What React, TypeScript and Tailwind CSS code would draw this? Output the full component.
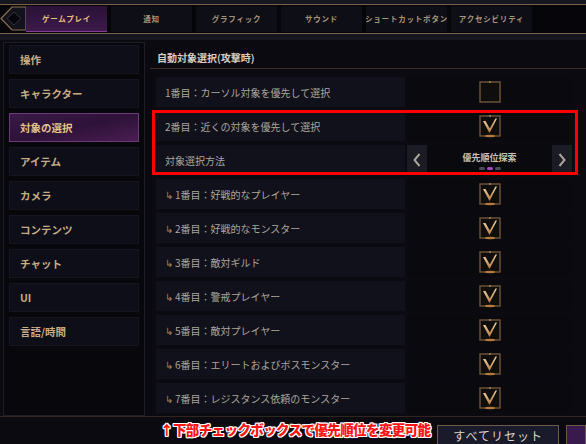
import React from 'react'

const tabs = ['ゲームプレイ', '通知', 'グラフィック', 'サウンド', 'ショートカットボタン', 'アクセシビリティ']

const menu = ['操作', 'キャラクター', '対象の選択', 'アイテム', 'カメラ', 'コンテンツ', 'チャット', 'UI', '言語/時間']

const subRows = [
  '1番目：好戦的なプレイヤー',
  '2番目：好戦的なモンスター',
  '3番目：敵対ギルド',
  '4番目：警戒プレイヤー',
  '5番目：敵対プレイヤー',
  '6番目：エリートおよびボスモンスター',
  '7番目：レジスタンス依頼のモンスター',
]

const Checkbox: React.FC<{ checked?: boolean }> = ({ checked }) => (
  <svg width="22" height="23" viewBox="0 0 22 23">
    <defs>
      <linearGradient id="chk" x1="0" y1="0" x2="0" y2="1">
        <stop offset="0" stopColor="#f3dcae" />
        <stop offset="1" stopColor="#b8783a" />
      </linearGradient>
    </defs>
    <rect x="1" y="1" width="20" height="20" fill="#100e0d" stroke="#6a5038" strokeWidth="1.5" />
    <circle cx="11" cy="1" r="1" fill="#a88458" />
    {checked && (
      <>
        <path d="M4 6 L10.5 18 L18 3.5 L16.5 3.5 L10.8 13.5 L6.5 6 Z" fill="url(#chk)" />
        <ellipse cx="11" cy="21" rx="5" ry="1.2" fill="#d28a3a" opacity="0.8" />
      </>
    )}
  </svg>
)

const Row: React.FC<{ children: React.ReactNode; right: React.ReactNode }> = ({ children, right }) => (
  <div className="flex h-[30px] gap-[2px] ml-[6px]">
    <div className="w-[249px] bg-[#10111b] flex items-center pl-[9px] text-[10px] text-[#aca69c]">
      {children}
    </div>
    <div className="w-[165px] bg-[#09090e] flex items-center justify-center">{right}</div>
  </div>
)

export default function App() {
  return (
    <div className="relative w-[586px] h-[444px] overflow-hidden bg-[#0a0a10] font-['Noto_Sans_CJK_JP','Noto_Sans',sans-serif]">
      {/* tab bar */}
      <div className="h-[40px] bg-[#161621] pt-[4px]">
        <div className="flex items-center h-[30px] border-y border-[#7a6146] bg-[#06060a]">
          <svg width="27" height="30" viewBox="0 0 27 30" className="shrink-0 -ml-[1px]">
            <path d="M2 14.5 L13 3 L27 3 L27 26 L13 26 Z" fill="#12121b" stroke="#8a7050" strokeWidth="1.2" />
            <path d="M8 14.5 L15 8 L22 14.5 L15 21 Z" fill="#06060a" stroke="#3a3040" strokeWidth="1" />
          </svg>
          <div className="flex gap-[4px] h-[26px]">
            {tabs.map((t, i) => (
              <div
                key={t}
                className={
                  i === 0
                    ? 'w-[81px] shrink-0 flex items-center justify-center bg-gradient-to-b from-[#2a1236] to-[#3d1a4c] border-b border-[#8a3a9a] text-[7.5px] font-bold text-[#e6c27e] tracking-[0.8px]'
                    : 'w-[81px] shrink-0 flex items-center justify-center bg-[#0e0e16] text-[7.5px] font-bold text-[#a8957a] tracking-[0.8px] overflow-hidden whitespace-nowrap'
                }
              >
                {t}
              </div>
            ))}
          </div>
        </div>
      </div>

      <div className="flex pt-[2px]">
        {/* sidebar */}
        <div className="ml-[3px] w-[142px] h-[374px] border border-[#1e1e28] bg-[#08080c] px-[5px] pt-[2px] flex flex-col gap-[5px]">
          {menu.map((m, i) => (
            <div
              key={m}
              className={
                i === 2
                  ? 'h-[29px] flex items-center pl-[10px] text-[10.5px] font-bold text-[#e4c48c] bg-gradient-to-br from-[#3a1a48] via-[#2e1238] to-[#4a1e52] border border-[#6a3a78]'
                  : 'h-[29px] flex items-center pl-[10px] text-[10.5px] font-bold text-[#c8ad84] bg-[#0e0e18] border border-[#15151f]'
              }
            >
              {m}
            </div>
          ))}
        </div>

        {/* content */}
        <div className="ml-[5px] flex-1">
          <div className="h-[27px] flex items-end pl-[7px] pb-[3px] border-b border-[#3a3128] text-[10px] font-bold text-[#d8d0c0]">
            自動対象選択(攻撃時)
          </div>
          <div className="pt-[8px] flex flex-col gap-[4px]">
            <Row right={<Checkbox />}>1番目：カーソル対象を優先して選択</Row>
            <Row right={<Checkbox checked />}>2番目：近くの対象を優先して選択</Row>
            <div className="flex h-[30px] gap-[2px] ml-[6px]">
              <div className="w-[249px] bg-[#10111b] flex items-center pl-[9px] text-[10px] text-[#aca69c]">
                対象選択方法
              </div>
              <div className="w-[165px] bg-[#09090e] flex items-stretch">
                <div className="w-[20px] bg-[#1b1b26] flex items-center justify-center text-[#a9a39a]">
                  <svg width="10" height="14" viewBox="0 0 10 14">
                    <path d="M7.5 1 L2.5 7 L7.5 13" fill="none" stroke="currentColor" strokeWidth="2" />
                  </svg>
                </div>
                <div className="flex-1 flex flex-col items-center justify-center gap-[5px] pt-[2px]">
                  <div className="text-[9px] text-[#c9c2b6] font-bold leading-none">優先順位探索</div>
                  <div className="flex gap-[2px]">
                    <div className="w-[6px] h-[3px] rounded-full bg-[#4b4b5c]" />
                    <div className="w-[6px] h-[3px] rounded-full bg-[#a548c8]" />
                    <div className="w-[6px] h-[3px] rounded-full bg-[#4b4b5c]" />
                  </div>
                </div>
                <div className="w-[20px] bg-[#1b1b26] flex items-center justify-center text-[#a9a39a]">
                  <svg width="10" height="14" viewBox="0 0 10 14">
                    <path d="M2.5 1 L7.5 7 L2.5 13" fill="none" stroke="currentColor" strokeWidth="2" />
                  </svg>
                </div>
              </div>
            </div>
            {subRows.map((r) => (
              <Row key={r} right={<Checkbox checked />}>
                <span className="text-[#a3824f] mr-[2px]">↳</span>
                {r}
              </Row>
            ))}
          </div>
        </div>
      </div>

      {/* bottom */}
      <div className="border-t border-[#2e261f] h-[26px] flex items-start">
        <div className="ml-[160px] w-[283px] mt-[2px] text-[13.5px] font-black text-[#ff1414] whitespace-nowrap tracking-[-0.6px] [text-shadow:1px_1px_0_#fff,-1px_-1px_0_#fff,1px_-1px_0_#fff,-1px_1px_0_#fff,0_1px_0_#fff,0_-1px_0_#fff,1px_0_0_#fff,-1px_0_0_#fff]">
          ↑下部チェックボックスで優先順位を変更可能
        </div>
        <div className="mt-[8px] w-[125px] h-[22px] bg-[#191a2a] border border-[#6e5b47] flex justify-center pt-[3px] text-[12px] leading-[14px] text-[#d9d4cc] tracking-[1px]">
          すべてリセット
        </div>
        <div className="ml-[7px] mt-[8px] w-[20px] h-[22px] bg-[#3a1a4c] border border-[#6e5b47]" />
      </div>

      {/* highlight box */}
      <div className="absolute left-[152px] top-[110px] w-[426px] h-[65px] border-[3px] border-[#ff0000]" />
    </div>
  )
}
